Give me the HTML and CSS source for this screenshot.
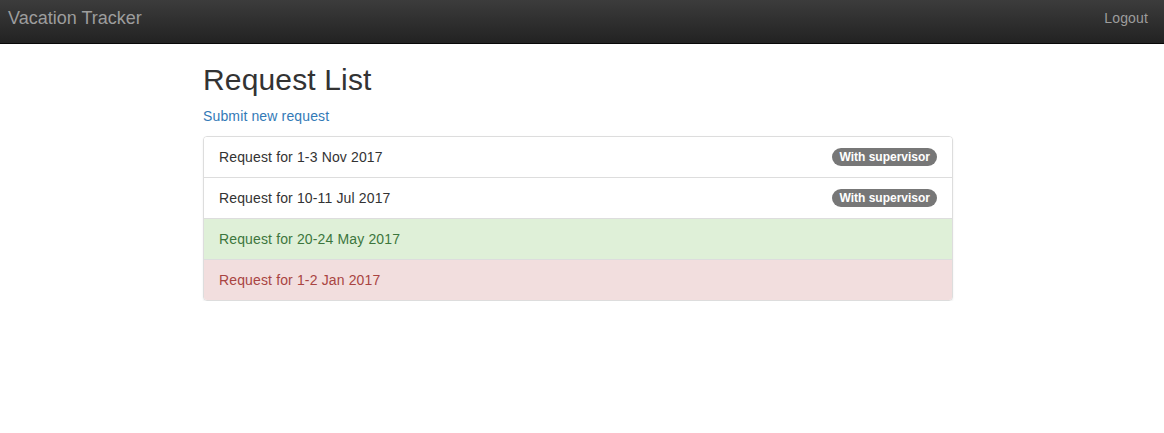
FILE: index.html
```html
<!DOCTYPE html>
<html lang="en">
<head>
<meta charset="utf-8">
<title>Vacation Tracker</title>
<link rel="stylesheet" href="styles.css">
</head>
<body>
<nav class="navbar">
  <a class="brand" href="#">Vacation Tracker</a>
  <a class="nav-link" href="#">Logout</a>
</nav>
<main class="container">
  <h2 class="title">Request List</h2>
  <p class="actions"><a class="link" href="#">Submit new request</a></p>
  <div class="list-group">
    <div class="list-item"><span>Request for 1-3 Nov 2017</span><span class="badge">With supervisor</span></div>
    <div class="list-item"><span>Request for 10-11 Jul 2017</span><span class="badge">With supervisor</span></div>
    <div class="list-item success"><span>Request for 20-24 May 2017</span></div>
    <div class="list-item danger"><span>Request for 1-2 Jan 2017</span></div>
  </div>
</main>
</body>
</html>
```
FILE: styles.css
```css
* { box-sizing: border-box; }
html, body { margin: 0; padding: 0; }
body {
  font-family: "Liberation Sans", Arial, sans-serif;
  font-size: 14px;
  line-height: 20px;
  letter-spacing: 0.01em;
  color: #333;
  background: #fff;
}
a { text-decoration: none; }
.navbar {
  height: 44px;
  display: flex;
  justify-content: space-between;
  align-items: flex-start;
  padding: 8px 16px 0 8px;
  background-color: #222;
  background-image: linear-gradient(to bottom, #3c3c3c 0, #222 100%);
  border-bottom: 1px solid #080808;
}
.brand {
  color: #9d9d9d;
  font-size: 18px;
  line-height: 20px;
  letter-spacing: 0;
}
.nav-link {
  color: #9d9d9d;
  font-size: 14px;
  line-height: 20px;
}
.container {
  width: 750px;
  margin-left: calc((100% - 758px) / 2);
}
.title {
  font-size: 30px;
  font-weight: 500;
  line-height: 33px;
  letter-spacing: 0.005em;
  margin: 19px 0 10px;
  color: #333;
}
.actions {
  margin: 0 0 10px;
}
.link { color: #337ab7; }
.list-group {
  border: 1px solid #ddd;
  border-radius: 4px;
  box-shadow: 0 1px 2px rgba(0,0,0,.08);
  overflow: hidden;
}
.list-item {
  display: flex;
  justify-content: space-between;
  align-items: center;
  padding: 10px 15px;
  height: 41px;
  border-top: 1px solid #ddd;
  background: #fff;
}
.list-item:first-child { border-top: 0; height: 40px; }
.list-item.success { background: #dff0d8; color: #3c763d; }
.list-item.danger { background: #f2dede; color: #a94442; }
.badge {
  display: inline-block;
  font-size: 12px;
  font-weight: 700;
  line-height: 12px;
  letter-spacing: 0;
  color: #fff;
  background: #777;
  padding: 3px 7px;
  border-radius: 10px;
}
```
